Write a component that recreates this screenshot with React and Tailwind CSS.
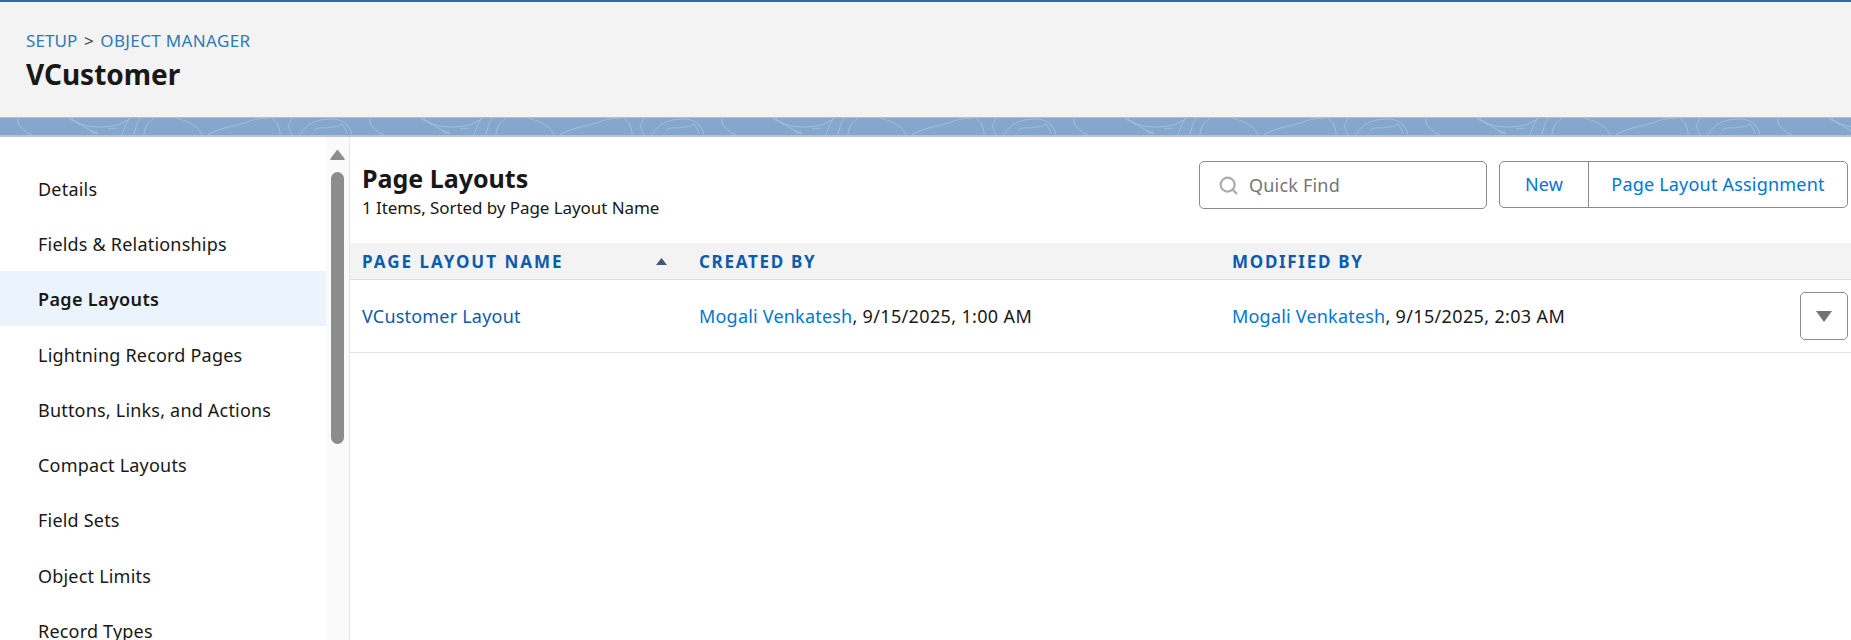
import { Search } from "lucide-react";

const navItems = [
    "Details",
    "Fields & Relationships",
    "Page Layouts",
    "Lightning Record Pages",
    "Buttons, Links, and Actions",
    "Compact Layouts",
    "Field Sets",
    "Object Limits",
    "Record Types",
];

const Band = () => (
    <svg className="block h-[17px] w-full" viewBox="0 0 1851 17" preserveAspectRatio="none">
        <defs>
            <pattern id="swirl" width="352" height="17" patternUnits="userSpaceOnUse">
                <g fill="none" stroke="#ffffff" strokeOpacity="0.25" strokeWidth="1">
                    <path d="M18 0c-2 6 4 12 14 17" />
                    <path d="M68 0c8 6 20 9 32 9s24-3 30-9" />
                    <path d="M70 0l28 17" />
                    <path d="M90 13l8 2M108 11l8-1" />
                    <path d="M122 17c2-7 4-12 8-17M134 17c1-7 3-12 6-17" />
                    <path d="M144 17c0-8 6-14 10-17" />
                    <path d="M176 0c14 4 24 10 26 17" />
                    <path d="M208 17c12-8 24-8 36-12s16-5 26-5" />
                    <path d="M272 0c6 5 8 10 8 17" />
                    <path d="M292 0l-4 8 4 9" />
                    <path d="M300 17c4-9 14-16 30-16s20 8 22 16" />
                    <path d="M314 12c6-4 12-1 18-3s4 2 8-2 4 6 8 8" />
                </g>
            </pattern>
        </defs>
        <rect width="1851" height="17" fill="url(#swirl)" />
    </svg>
);

const App = () => {
    return (
        <div className="flex h-[640px] flex-col overflow-hidden bg-white font-['Noto_Sans',sans-serif] text-[#181818]">
            <header className="h-[118px] shrink-0 border-t-2 border-b border-t-[#2a69aa] border-b-[#bdbdbd] bg-[#f3f3f3] pl-[26px] pt-[27px]">
                <div className="text-[17px] leading-[24px] tracking-[0.1px] text-[#2e7ab5]">
                    SETUP <span className="mx-[2px] text-[#444444]">&gt;</span>{" "}
                    <span className="tracking-[0.35px]">OBJECT MANAGER</span>
                </div>
                <h1 className="mt-[3px] text-[28px] font-bold leading-[36px]">VCustomer</h1>
            </header>
            <div className="h-[19px] shrink-0 border-b-2 border-[#b9c3cf] bg-[#85a6cd]">
                <Band />
            </div>

            <div className="flex min-h-0 flex-1">
                <aside className="flex w-[350px] shrink-0 border-r border-[#e5e5e5]">
                    <nav className="w-[326px] shrink-0 pt-[23.5px]">
                        {navItems.map((item) => (
                            <div
                                key={item}
                                className={
                                    item === "Page Layouts"
                                        ? "flex h-[55.3px] items-center bg-[#ebf3fc] pl-[38px] pt-[2px] text-[18px] font-semibold tracking-[0.35px]"
                                        : "flex h-[55.3px] items-center pl-[38px] pt-[2px] text-[18px] tracking-[0.2px]"
                                }
                            >
                                {item}
                            </div>
                        ))}
                    </nav>
                    <div className="flex flex-1 flex-col items-center bg-[#fafafa] pt-[12px]">
                        <svg width="15" height="11" viewBox="0 0 15 11" className="block">
                            <path d="M7.5 0.5 14.5 9.5a1 1 0 0 1-.8 1.5H1.3a1 1 0 0 1-.8-1.5Z" fill="#8c8c8c" />
                        </svg>
                        <div className="mt-[12px] h-[272px] w-[13px] rounded-[7px] bg-[#8c8c8c]" />
                    </div>
                </aside>

                <main className="min-w-0 flex-1">
                    <div className="flex h-[106px] items-start justify-between pr-[3px] pl-[12px] pt-[24px]">
                        <div>
                            <h2 className="text-[25px] font-bold leading-[34px]">Page Layouts</h2>
                            <p className="mt-[1px] text-[17px] leading-[23px] tracking-[-0.07px]">1 Items, Sorted by Page Layout Name</p>
                        </div>
                        <div className="flex items-start gap-[12px]">
                            <div className="flex h-[48px] w-[288px] items-center gap-[10px] rounded-[5px] border border-[#8a8a8a] pl-[18px]">
                                <Search size={21} strokeWidth={2.5} className="text-[#acacac]" />
                                <span className="text-[18px] tracking-[0.2px] text-[#757575]">Quick Find</span>
                            </div>
                            <div className="flex h-[47px] w-[349px] rounded-[5px] border border-[#8a8a8a] text-[18px] tracking-[0.2px] text-[#0176d3]">
                                <div className="flex w-[89px] items-center justify-center border-r border-[#8a8a8a]">New</div>
                                <div className="flex flex-1 items-center justify-center">Page Layout Assignment</div>
                            </div>
                        </div>
                    </div>

                    <div className="grid h-[37px] grid-cols-[337px_533px_1fr] items-center border-b border-[#dddddd] bg-[#f3f3f3] pl-[12px] pt-[1px] text-[17px] font-bold tracking-[1.7px] text-[#0b5cab]">
                        <div className="flex items-center justify-between pr-[32px]">
                            <span className="tracking-[2px]">PAGE LAYOUT NAME</span>
                            <svg width="11" height="7" viewBox="0 0 11 7" className="block">
                                <path d="M5.5 0 11 7H0Z" fill="#3f5c7c" />
                            </svg>
                        </div>
                        <div>CREATED BY</div>
                        <div>MODIFIED BY</div>
                    </div>

                    <div className="grid h-[73px] grid-cols-[337px_533px_1fr] items-center border-b border-[#e5e5e5] pl-[12px] text-[18px] tracking-[0.2px]">
                        <div className="text-[#0b5cab]">VCustomer Layout</div>
                        <div className="tracking-[0.35px]">
                            <span className="tracking-[0.2px] text-[#0176d3]">Mogali Venkatesh</span>, 9/15/2025, 1:00 AM
                        </div>
                        <div className="flex items-center justify-between pr-[3px]">
                            <div className="tracking-[0.35px]">
                                <span className="tracking-[0.2px] text-[#0176d3]">Mogali Venkatesh</span>, 9/15/2025, 2:03 AM
                            </div>
                            <div className="flex h-[48px] w-[48px] items-center justify-center rounded-[5px] border border-[#8a8a8a]">
                                <svg width="16" height="11" viewBox="0 0 16 11" className="block">
                                    <path d="M0 0H16L8 11Z" fill="#747474" />
                                </svg>
                            </div>
                        </div>
                    </div>
                </main>
            </div>
        </div>
    );
};

export default App;
